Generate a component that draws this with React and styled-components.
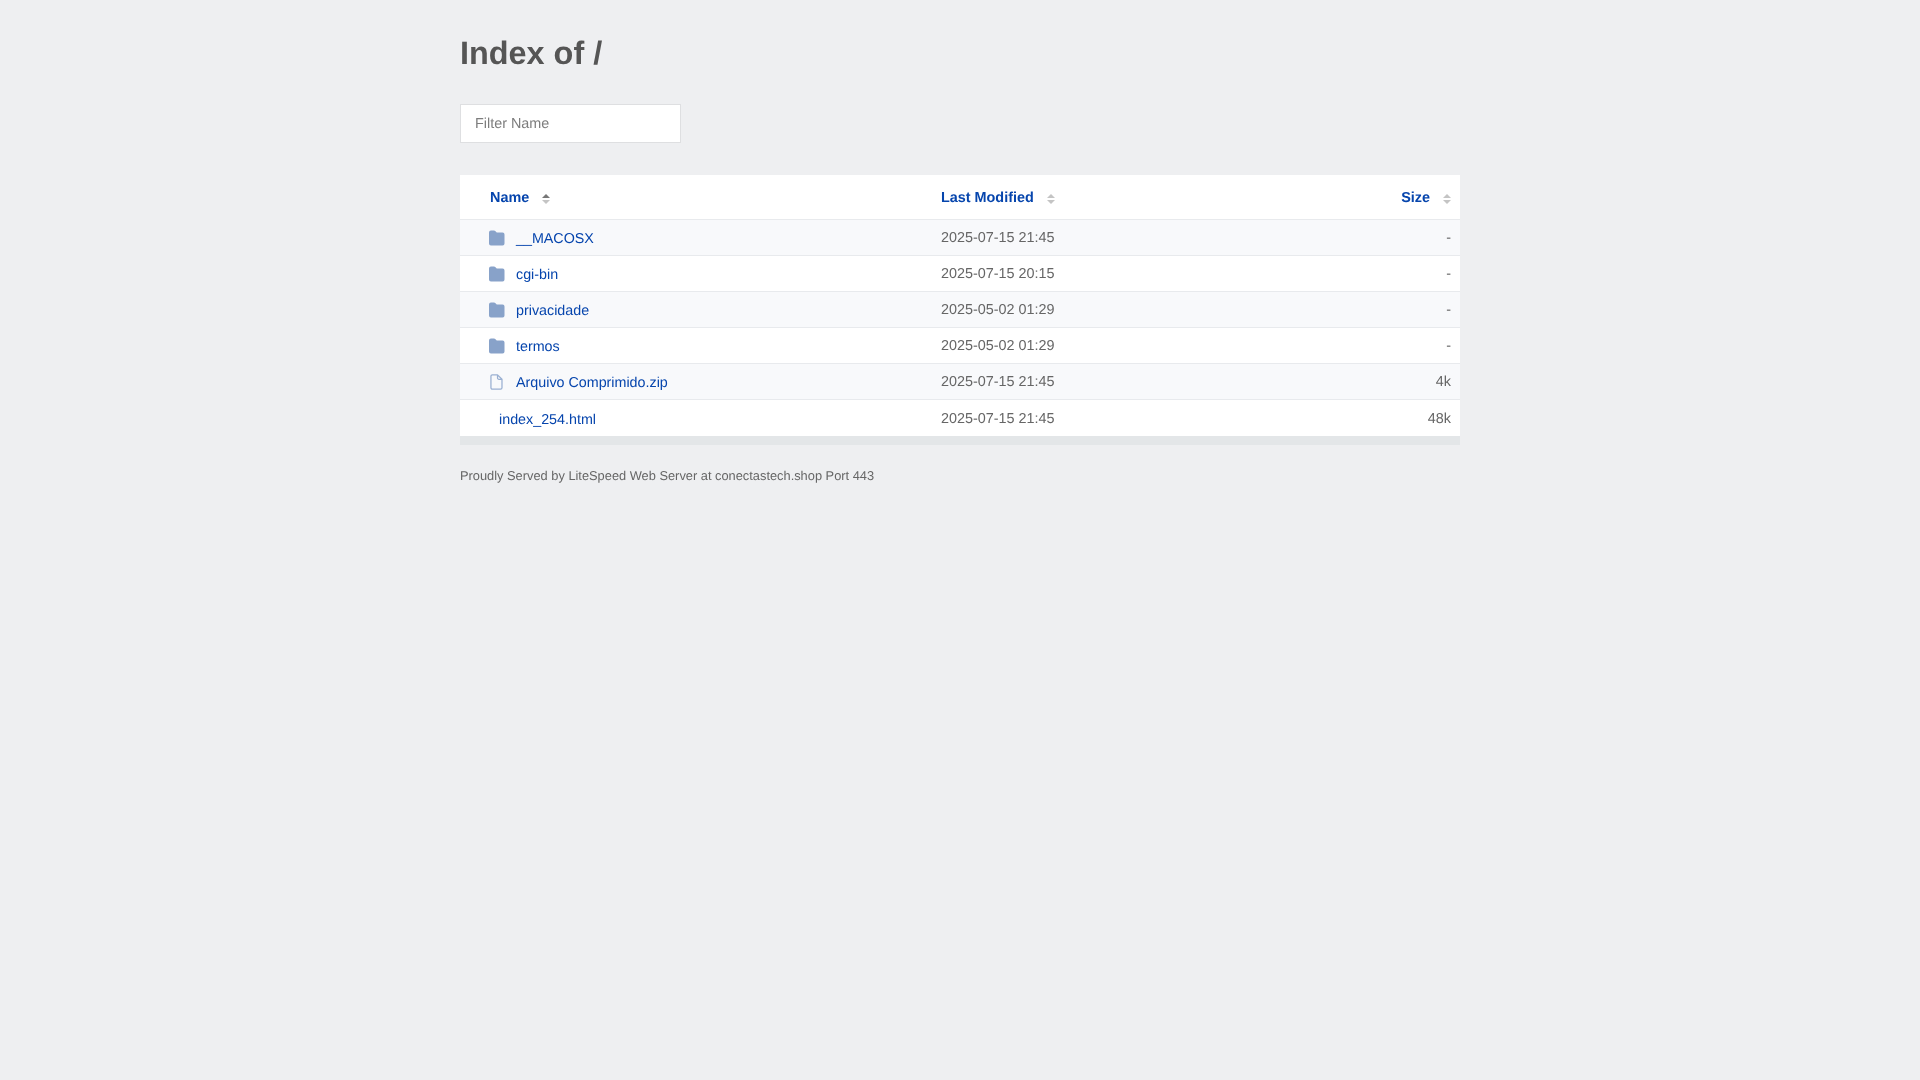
import React from 'react';
import styled, { createGlobalStyle } from 'styled-components';

const Global = createGlobalStyle`
  * { box-sizing: border-box; }
  html, body { margin: 0; padding: 0; height: 100%; }
  body {
    background: #eeeff1; color: #666; font-family: "Liberation Sans", Arial, sans-serif; font-size: 14.4px;
    text-rendering: geometricPrecision;
  }
`;
const Page = styled.main`width: 1000px; margin: 0 auto; padding-top: 33px; will-change: opacity;`;
const Title = styled.h1`margin: 0; font-size: 32.4px; line-height: 40px; font-weight: 700; color: #555;`;
const Filter = styled.input`
  display: block; margin-top: 31px; width: 221px; height: 39px; padding: 0 14px;
  background: #fff; border: 1px solid #dedfe1; font: 14.4px "Liberation Sans", Arial, sans-serif; color: #666;
  text-rendering: geometricPrecision;
  &::placeholder { color: #7d7d7d; opacity: 1; }
`;
const Card = styled.section`margin-top: 32px; background: #e3e6e8; padding-bottom: 9px;`;
const Grid = styled.div`
  display: grid; grid-template-columns: 481px 1fr 120px; height: ${p => p.$h}px;
  align-items: center; background: ${p => p.$bg}; border-bottom: ${p => p.$line ? '1px solid #e8eaed' : 'none'};
`;
const HeadLink = styled.a`
  display: flex; align-items: center; font-weight: 700; color: #0645ad; line-height: 20px; white-space: nowrap;
  padding: 2px ${p => p.$right ? 9 : 0}px 0 ${p => p.$pl || 0}px;
  justify-content: ${p => p.$right ? 'flex-end' : 'flex-start'};
`;
const Sort = styled.svg`width: 8px; height: 10px; margin-left: 13px; margin-top: 1px; flex: none;`;
const NameCell = styled.a`display: flex; align-items: center; color: #0645ad; font-size: 14.3px; padding-left: ${p => p.$pl}px; padding-top: 3px; white-space: nowrap;`;
const IconBox = styled.svg`width: 15.5px; height: 16px; margin: -3px 11.5px 0 0; flex: none; color: #88a2c9;`;
const Date = styled.div`color: #666; padding-top: 1px;`;
const Size = styled.div`text-align: right; color: #666; padding: 1px 9px 0 0;`;
const Footer = styled.address`margin-top: 23px; font-style: normal; font-size: 12.83px; line-height: 16px; color: #666;`;

const SortIcon = ({ dark }) => (
  <Sort viewBox="0 0 8 10">
    <path d="M4 0 8 4H0z" fill={dark ? '#777' : '#c4c4c4'} />
    <path d="M4 10 0 6h8z" fill="#c4c4c4" />
  </Sort>
);
const Folder = () => (
  <IconBox viewBox="0 0 16 16" preserveAspectRatio="none"><path fill="currentColor" d="M2 .5h3.2c.5 0 .9.2 1.2.5L8 2.5h6A2 2 0 0 1 16 4.5V13.5a2 2 0 0 1-2 2H2a2 2 0 0 1-2-2V2.5A2 2 0 0 1 2 .5z" /></IconBox>
);
const File = () => (
  <IconBox viewBox="0 0 16 16"><path fill="none" stroke="#9ab0d2" strokeWidth="1.3" strokeLinejoin="round" d="M2 2A1.4 1.4 0 0 1 3.4.6h5.4l4.6 4.6v8.8A1.4 1.4 0 0 1 12 15.4H3.4A1.4 1.4 0 0 1 2 14zM8.8.6v3.2a1.4 1.4 0 0 0 1.4 1.4h3.2" /></IconBox>
);

const rows = [
  ['__MACOSX', '2025-07-15 21:45', '-', 'folder'],
  ['cgi-bin', '2025-07-15 20:15', '-', 'folder'],
  ['privacidade', '2025-05-02 01:29', '-', 'folder'],
  ['termos', '2025-05-02 01:29', '-', 'folder'],
  ['Arquivo Comprimido.zip', '2025-07-15 21:45', '4k', 'file'],
  ['index_254.html', '2025-07-15 21:45', '48k', null],
];

export default function App() {
  return (
    <>
      <Global />
      <Page>
        <Title>Index of /</Title>
        <Filter placeholder="Filter Name" />
        <Card>
          <Grid $h={45} $bg="#fff" $line>
            <HeadLink $pl={30}>Name<SortIcon dark /></HeadLink>
            <HeadLink>Last Modified<SortIcon /></HeadLink>
            <HeadLink $right>Size<SortIcon /></HeadLink>
          </Grid>
          {rows.map(([n, d, s, t], i) => (
            <Grid key={n} $h={36} $bg={i % 2 ? '#fff' : '#f8f9fb'} $line={i < 5}>
              <NameCell $pl={t ? 29 : 39}>{t === 'folder' && <Folder />}{t === 'file' && <File />}{n}</NameCell>
              <Date>{d}</Date>
              <Size>{s}</Size>
            </Grid>
          ))}
        </Card>
        <Footer>Proudly Served by LiteSpeed Web Server at conectastech.shop Port 443</Footer>
      </Page>
    </>
  );
}
